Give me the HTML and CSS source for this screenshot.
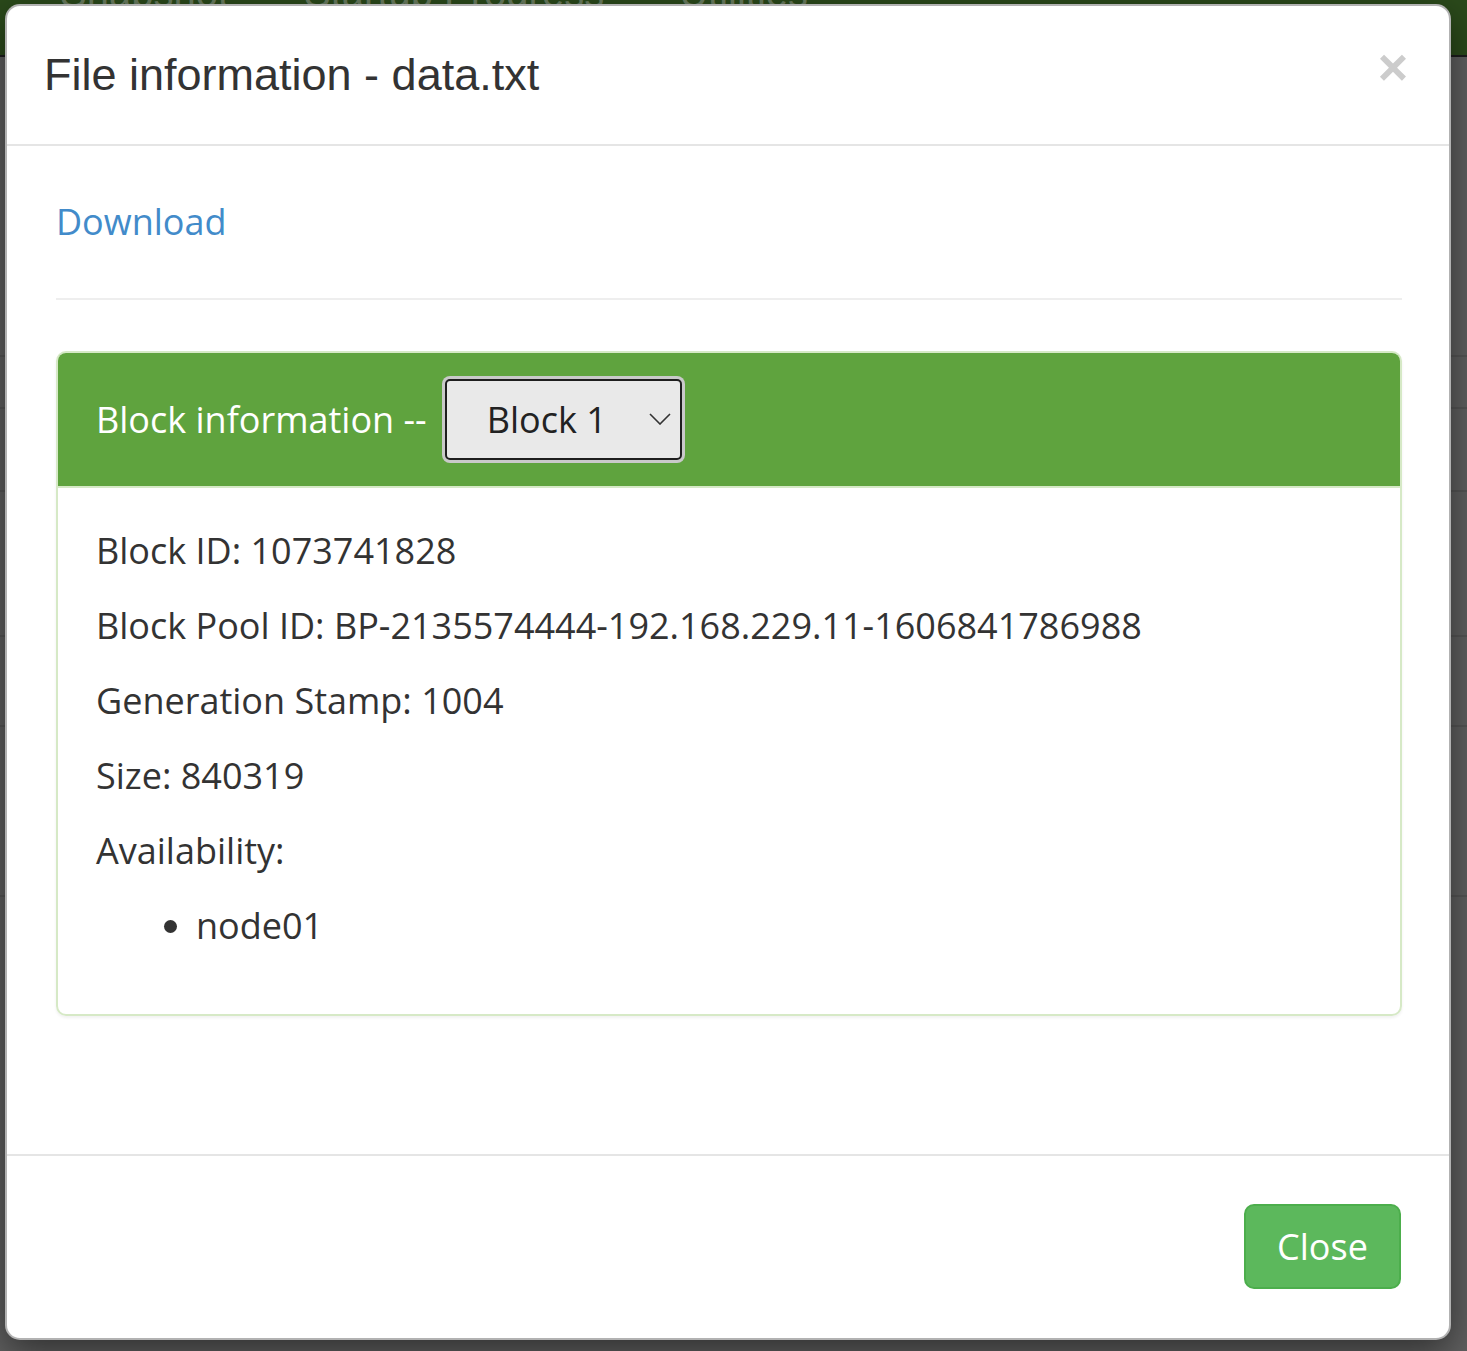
FILE: index.html
```html
<!DOCTYPE html>
<html lang="en">
<head>
<meta charset="utf-8">
<title>File information - data.txt</title>
<link rel="stylesheet" href="styles.css">
</head>
<body>
<div class="page">
  <div class="navbar">
    <span class="nav-item">Snapshot</span>
    <span class="nav-item">Startup Progress</span>
    <span class="nav-item">Utilities</span>
  </div>
  <div class="bg-row r1"></div>
  <div class="bg-row r2"></div>
  <div class="bg-row r3"></div>
  <div class="bg-row r4"></div>
  <div class="bg-row r5"></div>
  <div class="bg-row r6"></div>
</div>

<div class="modal">
  <div class="modal-header">
    <h4 class="modal-title">File information - data.txt</h4>
    <span class="close">&times;</span>
  </div>
  <div class="modal-body">
    <div class="download"><a href="#" class="link">Download</a></div>
    <hr class="divider">
    <div class="panel">
      <div class="panel-heading">
        <span class="heading-text">Block information --</span>
        <div class="select-wrap">
          <select class="block-select">
            <option>Block 1</option>
          </select>
          <svg class="chevron" width="22" height="12" viewBox="0 0 22 12"><path d="M1 1 L11 11 L21 1" fill="none" stroke="#333" stroke-width="1.6"/></svg>
        </div>
      </div>
      <div class="panel-body">
        <p>Block ID: 1073741828</p>
        <p>Block Pool ID: BP-2135574444-192.168.229.11-1606841786988</p>
        <p>Generation Stamp: 1004</p>
        <p>Size: 840319</p>
        <p>Availability:</p>
        <ul class="nodes">
          <li>node01</li>
        </ul>
      </div>
    </div>
  </div>
  <div class="modal-footer">
    <button class="btn-close">Close</button>
  </div>
</div>
</body>
</html>
```

FILE: styles.css
```css
html, body {
  margin: 0;
  padding: 0;
}
body {
  background: #606060;
  width: 1467px;
  height: 1351px;
  overflow: hidden;
  font-family: "Open Sans", "Noto Sans", sans-serif;
}
.page {
  display: flex;
  flex-direction: column;
}
.navbar {
  height: 55px;
  background: #2b4a1b;
  border-bottom: 2px solid #1c1c1c;
  display: flex;
  align-items: flex-end;
  gap: 75px;
  padding-left: 60px;
  overflow: hidden;
}
.nav-item {
  font-family: "Liberation Sans", Arial, sans-serif;
  font-size: 40px;
  line-height: 40px;
  color: #6a7d60;
  margin-bottom: 42px;
}
.bg-row {
  border-bottom: 2px solid #555555;
}
.r1 { height: 298px; }
.r2 { height: 50px; }
.r3 { height: 81px; }
.r4 { height: 143px; }
.r5 { height: 88px; }
.r6 { height: 168px; }

.modal {
  position: absolute;
  left: 5px;
  top: 4px;
  width: 1446px;
  box-sizing: border-box;
  background: #ffffff;
  border: 2px solid rgba(0, 0, 0, 0.3);
  border-radius: 15px;
  box-shadow: 0 12px 37px rgba(0, 0, 0, 0.5);
}
.modal-header {
  display: flex;
  justify-content: space-between;
  align-items: flex-start;
  padding: 37px 38px 37px 37px;
  border-bottom: 2px solid #e5e5e5;
}
.modal-title {
  margin: 0;
  font-family: "Liberation Sans", Arial, sans-serif;
  font-weight: normal;
  font-size: 45px;
  line-height: 64px;
  color: #333333;
}
.close {
  font-family: "Liberation Sans", Arial, sans-serif;
  font-weight: bold;
  font-size: 52px;
  line-height: 52px;
  color: #cccccc;
  margin-top: -2px;
  margin-right: 3px;
}
.modal-body {
  padding: 50px 47px 50px 49px;
}
.download {
  font-size: 36px;
  line-height: 50px;
  padding-top: 1px;
}
.link {
  color: #428bca;
  text-decoration: none;
}
.divider {
  margin: 51px 0 51px 0;
  border: 0;
  border-top: 2px solid #eeeeee;
}
.panel {
  border: 2px solid #d6e9c6;
  border-radius: 10px;
  box-shadow: 0 2px 3px rgba(0, 0, 0, 0.06);
  overflow: hidden;
  margin-bottom: 50px;
}
.panel-heading {
  background: #5fa33e;
  border-bottom: 2px solid #d6e9c6;
  padding: 26px 38px;
  display: flex;
  align-items: center;
  gap: 18px;
}
.heading-text {
  color: #ffffff;
  font-size: 36px;
  line-height: 50px;
}
.select-wrap {
  position: relative;
  display: flex;
}
.block-select {
  appearance: none;
  -webkit-appearance: none;
  width: 237px;
  height: 81px;
  box-sizing: border-box;
  background: #e9e9e9;
  border: 2px solid #1e1e1e;
  border-radius: 5px;
  box-shadow: 0 0 0 3px #c9c9c9;
  padding: 0 0 0 40px;
  font-family: "Open Sans", "Noto Sans", sans-serif;
  font-size: 36px;
  color: #222222;
  margin: 0;
}
.chevron {
  position: absolute;
  right: 11px;
  top: 34px;
}
.panel-body {
  padding: 38px 38px;
  color: #333333;
  font-size: 36px;
  line-height: 50px;
}
.panel-body p {
  margin: 0 0 25px 0;
}
.nodes {
  margin: 0 0 25px 0;
  padding-left: 100px;
}
.modal-footer {
  margin-top: 38px;
  padding: 48px 48px 49px 50px;
  border-top: 2px solid #e5e5e5;
  display: flex;
  justify-content: flex-end;
}
.btn-close {
  background: #5cb85c;
  border: 2px solid #4cae4c;
  border-radius: 10px;
  color: #ffffff;
  font-family: "Open Sans", "Noto Sans", sans-serif;
  font-size: 36px;
  line-height: 50px;
  height: 85px;
  width: 157px;
  padding: 0;
}
```
